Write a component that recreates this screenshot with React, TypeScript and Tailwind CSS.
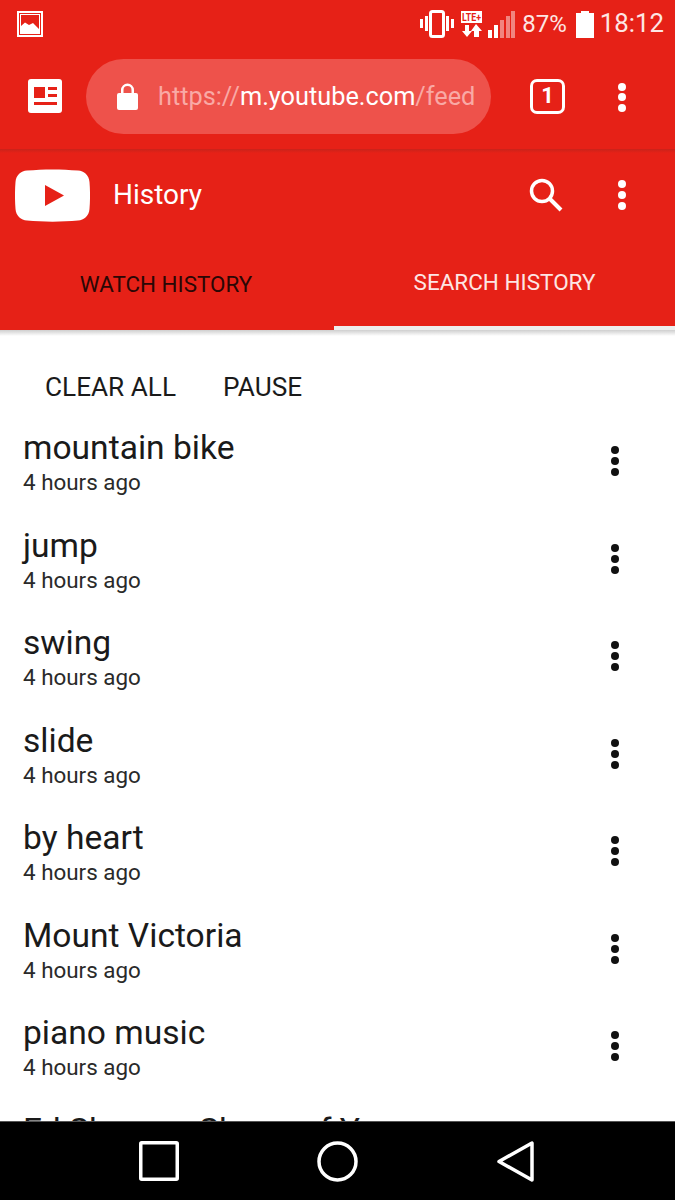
const items = ["mountain bike", "jump", "swing", "slide", "by heart", "Mount Victoria", "piano music"];

function Dots({ className }: { className: string }) {
  return (
    <div className={`flex flex-col items-center justify-between ${className}`}>
      <span className="size-[8px] rounded-full bg-current" />
      <span className="size-[8px] rounded-full bg-current" />
      <span className="size-[8px] rounded-full bg-current" />
    </div>
  );
}

function StatusBar() {
  return (
    <div className="flex h-[48px] items-center pl-[17px] pr-[11px] text-white">
      <svg width="26" height="26" viewBox="0 0 26 26">
        <rect x="1" y="1" width="24" height="24" fill="none" stroke="#fff" strokeWidth="2" />
        <rect x="3.500" y="3.500" width="19" height="19" fill="none" stroke="#fff" strokeWidth="1" />
        <path d="M4 22V15L8 11.500L12 14L16 12L22 18V22Z" fill="#fff" />
      </svg>
      <div className="ml-auto flex items-center">
        <svg width="34" height="28" viewBox="0 0 34 28" fill="#fff">
          <rect x="10.500" y="1.500" width="13" height="25" rx="2" fill="none" stroke="#fff" strokeWidth="3" />
          <rect x="5" y="6" width="3" height="15" />
          <rect x="0" y="9" width="3" height="9" />
          <rect x="26" y="6" width="3" height="15" />
          <rect x="31" y="9" width="3" height="9" />
        </svg>
        <svg className="ml-[7px]" width="21" height="26" viewBox="0 0 21 26" fill="#fff">
          <rect x="0" y="0" width="21" height="12" />
          <text x="1" y="10" fontSize="10" fontWeight="700" fontFamily="Roboto, sans-serif" fill="#e62117" textLength="19" lengthAdjust="spacingAndGlyphs">LTE+</text>
          <path d="M3 14H7V20H10L5 26L0 20H3Z" transform="translate(1 0)" />
          <path d="M15 13L21 20H18V26H13V20H10Z" />
        </svg>
        <svg className="ml-[6px]" width="27" height="27" viewBox="0 0 27 27" fill="#fff">
          <rect x="0" y="19" width="4" height="8" />
          <rect x="6" y="14" width="4" height="13" />
          <rect x="12" y="9" width="4" height="18" fillOpacity="0.45" />
          <rect x="18" y="5" width="4" height="22" fillOpacity="0.45" />
          <rect x="23" y="0" width="4" height="27" fillOpacity="0.45" />
        </svg>
        <span className="ml-[7px] text-[24px] leading-none text-[#fde6e4]">87%</span>
        <svg className="ml-[9px]" width="18" height="27" viewBox="0 0 18 27" fill="#fff">
          <path d="M5 0H13V2H18V27H0V2H5Z" />
        </svg>
        <span className="ml-[6px] text-[25.800px] leading-none text-[#fde6e4]">18:12</span>
      </div>
    </div>
  );
}

function BrowserBar() {
  return (
    <div className="flex h-[101px] items-center pb-[5px] text-white">
      <svg className="ml-[28px] shrink-0" width="34" height="34" viewBox="0 0 34 34">
        <rect width="34" height="34" rx="3" fill="#fff" />
        <rect x="6" y="8" width="11" height="11" fill="#e62117" />
        <rect x="20" y="8" width="9" height="3" fill="#e62117" />
        <rect x="20" y="15" width="9" height="3" fill="#e62117" />
        <rect x="6" y="23" width="23" height="3" fill="#e62117" />
      </svg>
      <div className="ml-[24px] flex h-[75px] w-[405px] shrink-0 items-center overflow-hidden rounded-full bg-[#ee524b] pl-[31px]">
        <svg className="shrink-0" width="21" height="27" viewBox="0 0 21 27" fill="#fff">
          <path d="M4 11V7a6.500 6.500 0 0 1 13 0v4h-2.500V7a4 4 0 0 0-8 0v4Z" />
          <rect y="10" width="21" height="17" rx="2" />
        </svg>
        <span className="ml-[20px] mt-[2px] whitespace-nowrap text-[25.300px] leading-none text-[#f9a9a5]">
          https://<span className="text-white">m.youtube.com</span>/feed
        </span>
      </div>
      <div className="ml-[39px] flex size-[35px] shrink-0 items-center justify-center rounded-[7px] border-[3px] border-white text-[22px] font-bold leading-none">
        1
      </div>
      <Dots className="ml-[51px] mt-[2px] h-[29px] w-[12px] text-white" />
    </div>
  );
}

function YoutubeHeader() {
  return (
    <div className="bg-[#e62117] text-white">
      <div className="h-[4px] bg-gradient-to-b from-[#c8231a] to-[#e62117]" />
      <div className="flex h-[84px] items-center">
        <svg className="ml-[15px] shrink-0" width="75" height="53" viewBox="0 0 75 53">
          <path d="M12 1.500C28 0 47 0 63 1.500C69 2 74 6 74.500 13C75.200 22 75.200 31 74.500 40C74 47 69 51 63 51.500C47 53 28 53 12 51.500C6 51 1 47 0.500 40C-0.200 31 -0.200 22 0.500 13C1 6 6 2 12 1.500Z" fill="#fff" />
          <path d="M30 16V37L49 26.500Z" fill="#e62117" />
        </svg>
        <span className="ml-[23px] text-[28px] leading-none">History</span>
        <svg className="ml-auto shrink-0" width="34" height="34" viewBox="0 0 34 34" fill="none" stroke="#fff">
          <circle cx="13" cy="13" r="10.500" strokeWidth="3.500" />
          <path d="M20.500 20.500L32 32" strokeWidth="4" />
        </svg>
        <Dots className="ml-[53px] mr-[47px] h-[30px] w-[12px] text-white" />
      </div>
      <div className="flex h-[93px]">
        <div className="flex w-[334px] items-center justify-center pr-[2px] pt-[3px] text-[22.400px] text-[#2a0705]">
          WATCH HISTORY
        </div>
        <div className="flex flex-1 flex-col">
          <div className="flex flex-1 items-center justify-center pt-[3px] text-[22.500px] text-[#fde6e4]">
            SEARCH HISTORY
          </div>
          <div className="h-[4px] bg-[#eeeeee]" />
        </div>
      </div>
    </div>
  );
}

export default function App() {
  return (
    <div className="flex h-[1200px] w-[675px] flex-col overflow-hidden bg-white font-['Roboto',sans-serif]">
      <div className="bg-[#e62117]">
        <StatusBar />
        <BrowserBar />
      </div>
      <YoutubeHeader />
      <div className="h-[6px] bg-gradient-to-b from-[#cfcfcf] to-white" />
      <div className="relative min-h-0 flex-1 overflow-hidden text-[#1a1a1a]">
        <div className="flex gap-[47px] pl-[45px] pt-[33px] text-[26.200px] leading-[36px]">
          <span>CLEAR ALL</span>
          <span>PAUSE</span>
        </div>
        <div className="mt-[23px]">
          {items.map((t) => (
            <div key={t} className="flex h-[97.500px] items-start pl-[23px] pr-[55px]">
              <div className="flex-1">
                <div className="text-[33.600px] leading-[40px]">{t}</div>
                <div className="text-[22.400px] leading-[28px] text-[#2a2a2a]">4 hours ago</div>
              </div>
              <Dots className="mt-[18px] h-[30px] w-[10px] text-[#111111]" />
            </div>
          ))}
          <div className="pl-[23px] text-[33.600px] leading-[40px]">Ed Sheeran Shape of You</div>
        </div>
      </div>
      <div className="flex h-[79px] shrink-0 items-center border-t border-[#555555] bg-black">
        <svg className="ml-[139px]" width="40" height="40" viewBox="0 0 40 40" fill="none" stroke="#fff" strokeWidth="3.500">
          <rect x="1.750" y="1.750" width="36.500" height="36.500" rx="1" />
        </svg>
        <svg className="ml-[138px]" width="41" height="41" viewBox="0 0 41 41" fill="none" stroke="#fff" strokeWidth="3.500">
          <circle cx="20.500" cy="20.500" r="18.500" />
        </svg>
        <svg className="ml-[139px]" width="37" height="41" viewBox="0 0 37 41" fill="none" stroke="#fff" strokeWidth="3.500" strokeLinejoin="round">
          <path d="M35 2V39L2 20.500Z" />
        </svg>
      </div>
    </div>
  );
}
